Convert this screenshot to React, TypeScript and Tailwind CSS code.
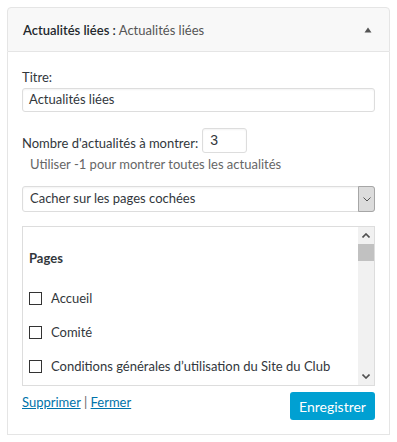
import React from "react";

function Checkbox() {
  return <span className="inline-block w-[13px] h-[13px] border border-[#333] bg-white shrink-0" />;
}

export default function App() {
  const items = ["Accueil", "Comité", "Conditions générales d’utilisation du Site du Club"];
  return (
    <div className="w-[397px] h-[442px] bg-white pt-[7px] pl-[7px]" style={{ fontFamily: "Lato, 'Open Sans', sans-serif" }}>
      <div className="w-[383px] text-[13px] text-[#32373c]">
        <div className="h-[45px] bg-[#f8f8f8] border border-[#e5e5e5] rounded-t-[4px] flex items-center justify-between pl-[15px] pr-[17px]">
          <div className="text-[13px] leading-5">
            <span className="font-semibold text-[#23282d]">Actualités liées :</span>
            <span className="text-[#555]"> Actualités liées</span>
          </div>
          <svg width="8" height="6" viewBox="0 0 8 6">
            <path d="M4 0.5 L7.5 5.5 L0.5 5.5 Z" fill="#555" />
          </svg>
        </div>
        <div className="border border-t-0 border-[#e5e5e5] h-[383px] px-[14px] pt-[15px]">
          <div className="leading-5">Titre:</div>
          <div className="mt-[1px] h-[24px] border border-[#ddd] rounded-[3px] px-[6px] flex items-center text-[#32373c] shadow-[inset_0_1px_2px_rgba(0,0,0,0.05)]">
            Actualités liées
          </div>
          <div className="mt-[15px] flex items-center">
            <span className="mt-[6px] leading-5">Nombre d'actualités à montrer:</span>
            <div className="ml-[4px] w-[45px] h-[25px] border border-[#ddd] rounded-[3px] px-[7px] flex items-center text-[14px] shadow-[inset_0_1px_2px_rgba(0,0,0,0.05)]" style={{ fontFamily: "'Liberation Sans', Arial, sans-serif" }}>
              3
            </div>
          </div>
          <div className="pl-[8px] mt-[1px] leading-5 text-[#666]">Utiliser -1 pour montrer toutes les actualités</div>
          <div className="mt-[12px] h-[26px] border border-[#ddd] rounded-[3px] flex items-stretch shadow-[inset_0_1px_2px_rgba(0,0,0,0.05)]">
            <div className="flex-1 pl-[7px] flex items-center">Cacher sur les pages cochées</div>
            <div className="w-[17px] my-[-1px] mr-[-1px] bg-[#dcdcdc] border border-[#a6a6a6] rounded-r-[3px] flex items-center justify-center">
              <svg width="8" height="5" viewBox="0 0 8 5">
                <path d="M0.5 0.5 L4 4 L7.5 0.5" stroke="#555" strokeWidth="1" fill="none" />
              </svg>
            </div>
          </div>
          <div className="mt-[14px] h-[160px] border border-[#ddd] flex">
            <div className="flex-1 pl-[6px] pt-[21px]">
              <div className="font-bold leading-5">Pages</div>
              <div className="mt-[20px] flex flex-col gap-[14px]">
                {items.map((t) => (
                  <div key={t} className="flex items-center h-5 leading-5">
                    <Checkbox />
                    <span className="ml-[9px] whitespace-nowrap">{t}</span>
                  </div>
                ))}
              </div>
            </div>
            <div className="w-[16px] bg-[#f1f1f1] flex flex-col items-center">
              <div className="h-[17px] flex items-center justify-center">
                <svg width="8" height="5" viewBox="0 0 8 5">
                  <path d="M0.5 4.5 L4 1 L7.5 4.5" stroke="#505050" strokeWidth="1.6" fill="none" />
                </svg>
              </div>
              <div className="w-[16px] h-[17px] bg-[#c1c1c1]" />
              <div className="flex-1" />
              <div className="h-[17px] flex items-center justify-center">
                <svg width="8" height="5" viewBox="0 0 8 5">
                  <path d="M0.5 0.5 L4 4 L7.5 0.5" stroke="#505050" strokeWidth="1.6" fill="none" />
                </svg>
              </div>
            </div>
          </div>
          <div className="mt-[6px] flex items-start justify-between">
            <div className="mt-[0px] leading-5 text-[13px]">
              <a className="text-[#0073aa] underline">Supprimer</a>
              <span className="text-[#666]"> | </span>
              <a className="text-[#0073aa] underline">Fermer</a>
            </div>
            <button className="w-[85px] h-[28px] bg-[#00a0d2] text-white rounded-[3px] text-[14px]">Enregistrer</button>
          </div>
        </div>
      </div>
    </div>
  );
}
